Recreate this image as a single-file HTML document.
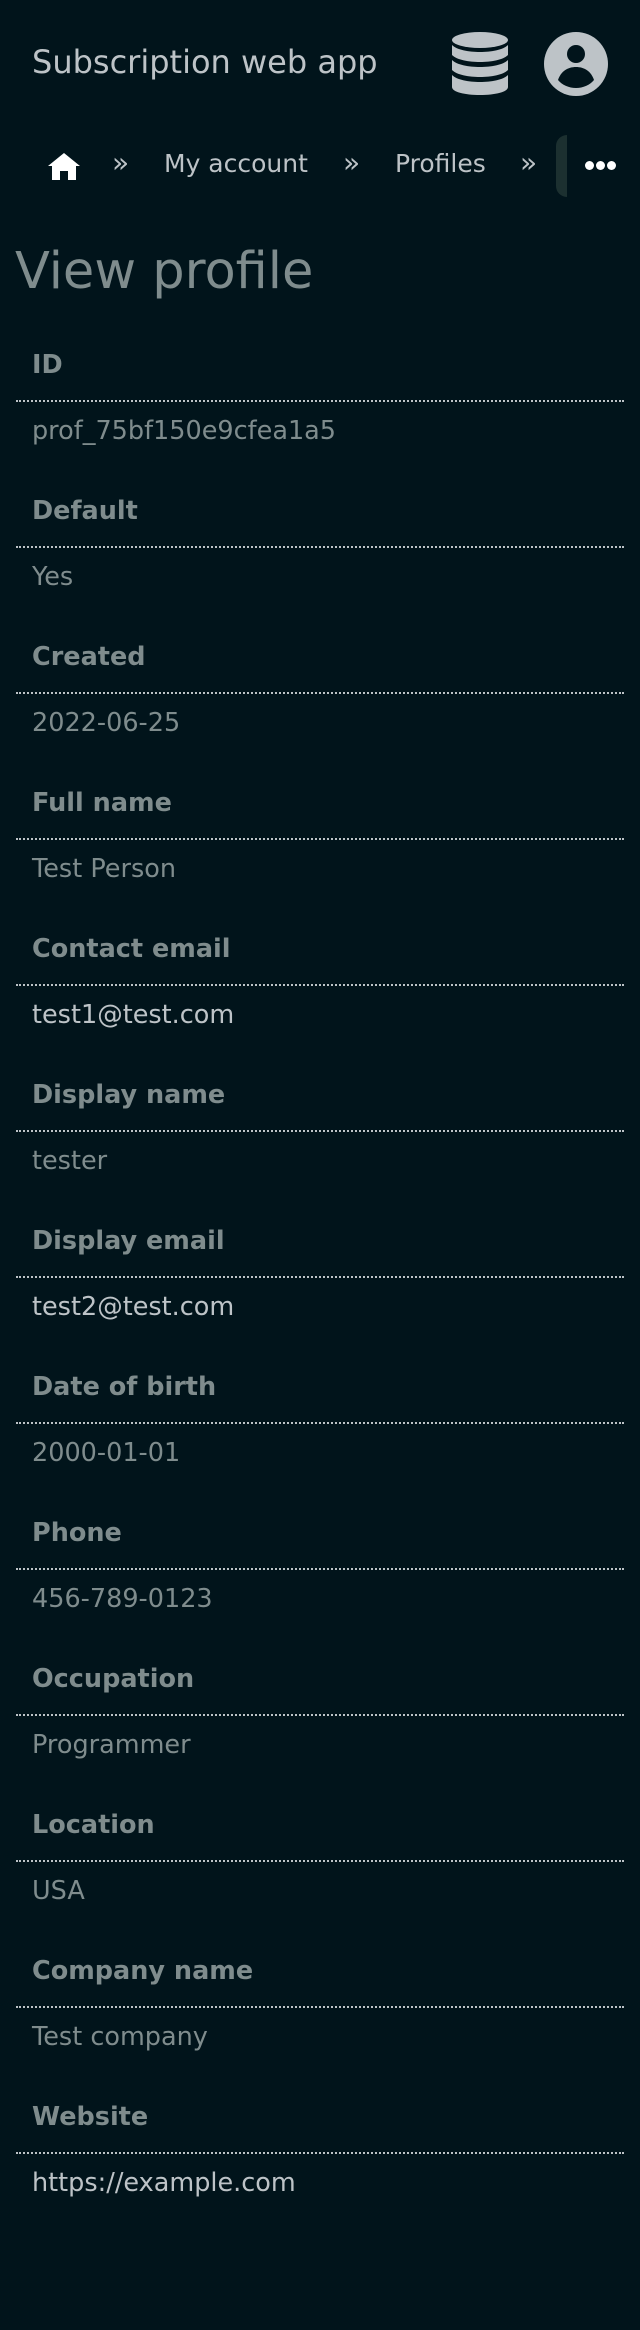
<!DOCTYPE html>
<html><head><meta charset="utf-8"><style>
*{margin:0;padding:0;box-sizing:border-box}
body{width:640px;height:2330px;background:#01141b;font-family:"DejaVu Sans","Liberation Sans",sans-serif;position:relative;overflow:hidden}
.a{position:absolute;white-space:nowrap}
.e{position:absolute;left:0;width:640px;height:146px}
.l{position:absolute;left:32px;top:0;font-size:25.5px;font-weight:bold;line-height:30px;color:#7f8c8d}
.d{position:absolute;left:16px;width:608px;top:50px;border-top:2px dotted #bdc3c7}
.v{position:absolute;left:32px;top:66px;font-size:25.5px;line-height:30px;color:#7f8c8d}
.v.k{color:#bdc3c7}
</style></head><body>
<div class="a" style="left:32px;top:42px;font-size:32px;line-height:40px;color:#bdc3c7">Subscription web app</div>
<svg class="a" style="left:452px;top:32px" width="56" height="63" viewBox="0 0 56 63"><g fill="#bdc3c7"><ellipse cx="28" cy="8" rx="28" ry="8"/><path d="M0 13c5 5 17 7 28 7s23-2 28-7v10c-5 5-17 7-28 7S5 28 0 23z"/><path d="M0 28c5 5 17 7 28 7s23-2 28-7v10c-5 5-17 7-28 7S5 43 0 38z"/><path d="M0 43c5 5 17 7 28 7s23-2 28-7v12c0 5-13 8-28 8S0 60 0 55z"/></g></svg>
<svg class="a" style="left:544px;top:32px" width="64" height="64" viewBox="0 0 64 64"><circle cx="32" cy="32" r="32" fill="#bdc3c7"/><circle cx="32" cy="22" r="9" fill="#01141b"/><path d="M14 48c3-9 10-13 18-13s15 4 18 13c-4 5-11 8-18 8s-14-3-18-8z" fill="#01141b"/></svg>
<svg class="a" style="left:48px;top:153px" width="32" height="27" viewBox="0 0 32 27"><path d="M16 0L0 13h4v14h8v-9h8v9h8V13h4z" fill="#fff"/></svg>
<div class="a" style="left:112px;top:148px;font-size:28px;line-height:30px;color:#bdc3c7">»</div>
<div class="a" style="left:164px;top:149px;font-size:25px;line-height:30px;color:#bdc3c7">My account</div>
<div class="a" style="left:343px;top:148px;font-size:28px;line-height:30px;color:#bdc3c7">»</div>
<div class="a" style="left:395px;top:149px;font-size:25px;line-height:30px;color:#bdc3c7">Profiles</div>
<div class="a" style="left:520px;top:148px;font-size:28px;line-height:30px;color:#bdc3c7">»</div>
<div class="a" style="left:556px;top:135px;width:22px;height:62px;border-radius:11px 0 0 11px;background:#1c3030;clip-path:inset(0 11px 0 0)"></div>
<div class="a" style="left:585px;top:161px;width:9px;height:9px;border-radius:50%;background:#fff"></div>
<div class="a" style="left:596px;top:161px;width:9px;height:9px;border-radius:50%;background:#fff"></div>
<div class="a" style="left:607px;top:161px;width:9px;height:9px;border-radius:50%;background:#fff"></div>
<div class="a" style="left:15px;top:240px;font-size:51px;line-height:64px;color:#7f8c8d">View profile</div>

<div class="e" style="top:350px"><div class="l">ID</div><div class="d"></div><div class="v">prof_75bf150e9cfea1a5</div></div>
<div class="e" style="top:496px"><div class="l">Default</div><div class="d"></div><div class="v">Yes</div></div>
<div class="e" style="top:642px"><div class="l">Created</div><div class="d"></div><div class="v">2022-06-25</div></div>
<div class="e" style="top:788px"><div class="l">Full name</div><div class="d"></div><div class="v">Test Person</div></div>
<div class="e" style="top:934px"><div class="l">Contact email</div><div class="d"></div><div class="v k">test1@test.com</div></div>
<div class="e" style="top:1080px"><div class="l">Display name</div><div class="d"></div><div class="v">tester</div></div>
<div class="e" style="top:1226px"><div class="l">Display email</div><div class="d"></div><div class="v k">test2@test.com</div></div>
<div class="e" style="top:1372px"><div class="l">Date of birth</div><div class="d"></div><div class="v">2000-01-01</div></div>
<div class="e" style="top:1518px"><div class="l">Phone</div><div class="d"></div><div class="v">456-789-0123</div></div>
<div class="e" style="top:1664px"><div class="l">Occupation</div><div class="d"></div><div class="v">Programmer</div></div>
<div class="e" style="top:1810px"><div class="l">Location</div><div class="d"></div><div class="v">USA</div></div>
<div class="e" style="top:1956px"><div class="l">Company name</div><div class="d"></div><div class="v">Test company</div></div>
<div class="e" style="top:2102px"><div class="l">Website</div><div class="d"></div><div class="v k">https://example.com</div></div>
</body></html>
